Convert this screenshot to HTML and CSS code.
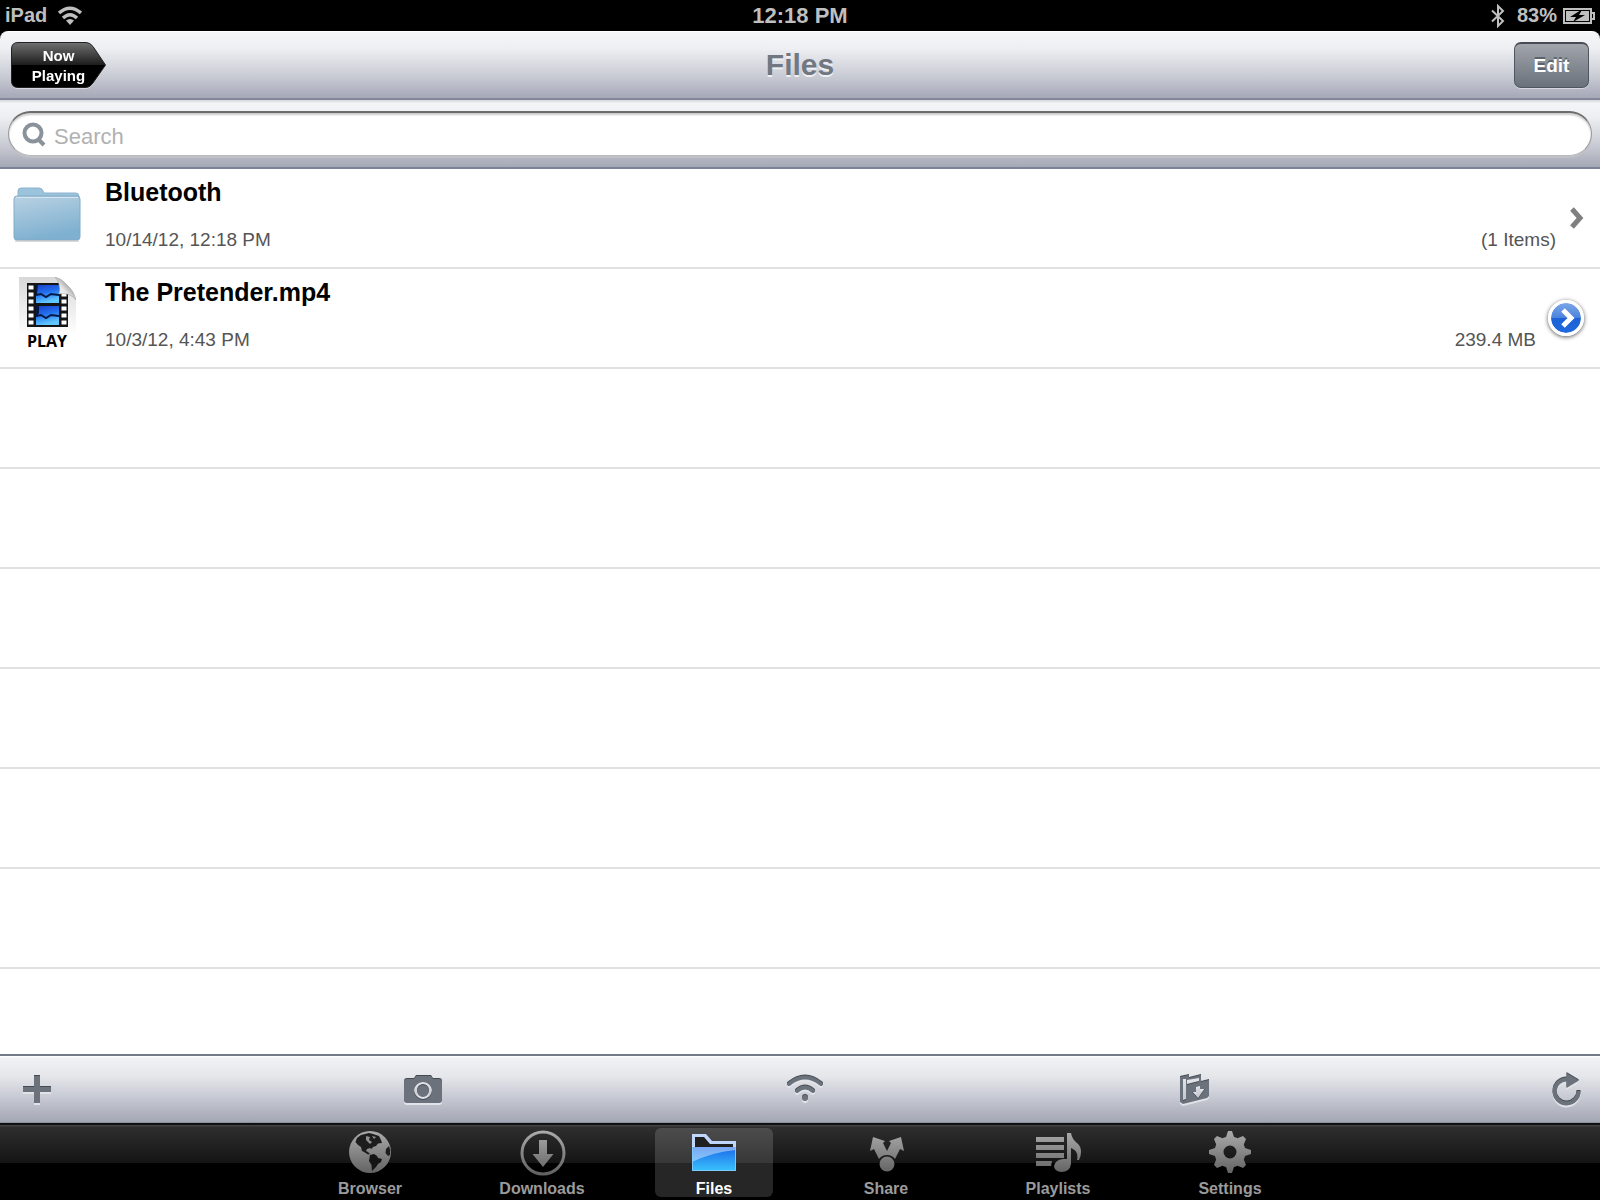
FILE: index.html
```html
<!DOCTYPE html>
<html lang="en">
<head>
    <meta charset="UTF-8">
    <meta name="viewport" content="width=device-width, initial-scale=1.0">
    <title>Files</title>
    <link rel="stylesheet" href="styles.css">
</head>
<body>
    <div class="status-bar">
        <div class="status-left">
            <span>iPad</span>
            <svg width="24" height="20" viewBox="0 0 24 20" fill="none" stroke="#bfbfbf" stroke-width="3.5">
                <path d="M1 7Q12 -2.5 23 7"/>
                <path d="M5 12Q12 5.5 19 12"/>
                <path d="M8 14.500Q12 11.500 16 14.500L12 19Z" fill="#bfbfbf" stroke="none"/>
            </svg>
        </div>
        <div class="status-time">12:18 PM</div>
        <div class="status-right">
            <svg width="14" height="24" viewBox="0 0 14 24" fill="none" stroke="#bfbfbf" stroke-width="2">
                <path d="M1 6.5L12 17L7 22V2L12 7L1 17.5"/>
            </svg>
            <span>83%</span>
            <svg width="32" height="16" viewBox="0 0 32 16">
                <rect x="1" y="1" width="27" height="14" fill="none" stroke="#bfbfbf" stroke-width="2"/>
                <rect x="3" y="3" width="23" height="10" fill="#bfbfbf"/>
                <path d="M29 5H31V11H29" fill="none" stroke="#bfbfbf" stroke-width="2"/>
                <path d="M18 2L7 9H13L10 14L22 7H16L19 2Z" fill="#000"/>
            </svg>
        </div>
    </div>

    <header class="nav-bar">
        <button class="now-playing" type="button">
            <svg class="now-playing-shape" viewBox="0 0 95 46">
                <defs>
                    <linearGradient id="black-gloss" x1="0" y1="0" x2="0" y2="1">
                        <stop offset="0" stop-color="#707070"/>
                        <stop offset="0.5" stop-color="#1c1c1c"/>
                        <stop offset="0.51" stop-color="#000"/>
                        <stop offset="1" stop-color="#000"/>
                    </linearGradient>
                </defs>
                <path d="M7 0.5H75Q79 0.5 82 4.5L94.5 23L82 41Q79 45.5 75 45.5H7Q0.5 45.5 0.5 39V7Q0.5 0.5 7 0.5Z" fill="url(#black-gloss)" stroke="#222"/>
            </svg>
            <span>Now<br>Playing</span>
        </button>
        <h1>Files</h1>
        <button class="edit" type="button">Edit</button>
    </header>

    <div class="search-bar">
        <label class="search-field">
            <svg width="24" height="26" viewBox="0 0 24 26" fill="none" stroke="#8a929b">
                <circle cx="11" cy="12" r="8.5" stroke-width="4"/>
                <path d="M16 18L22 24" stroke-width="4"/>
            </svg>
            <input type="text" placeholder="Search" aria-label="Search">
        </label>
    </div>

    <ul class="files">
        <li>
            <div class="thumb">
                <svg width="70" height="60" viewBox="0 0 70 60">
                    <defs>
                        <linearGradient id="folder" x1="0" y1="0" x2="0.3" y2="1">
                            <stop offset="0" stop-color="#b9d2e3"/>
                            <stop offset="1" stop-color="#7fb0d0"/>
                        </linearGradient>
                    </defs>
                    <path d="M6 12V5Q6 2 9 2H27Q30 2 31 5L32 7H64Q67 7 67 11V17H3Z" fill="#9cc3dc" stroke="#8ab3cd"/>
                    <rect x="2" y="10" width="66" height="44" rx="3" fill="url(#folder)" stroke="#82abc6"/>
                    <path d="M4 11.5H66" stroke="#d3e6f2"/>
                    <path d="M3 55H67" stroke="#b6b6b6"/>
                </svg>
            </div>
            <div class="info">
                <h2>Bluetooth</h2>
                <p><span>10/14/12, 12:18 PM</span><span>(1 Items)</span></p>
            </div>
            <a class="open" href="#bluetooth" aria-label="Open Bluetooth">
                <svg width="16" height="22" viewBox="0 0 16 22"><path d="M3 2L11 11L3 20" fill="none" stroke="#7f7f7f" stroke-width="5"/></svg>
            </a>
        </li>
        <li class="movie">
            <div class="thumb">
                <svg width="58" height="58" viewBox="0 0 58 58">
                    <defs>
                        <linearGradient id="paper" x1="0" y1="0" x2="0" y2="1">
                            <stop offset="0" stop-color="#d8d8d8"/>
                            <stop offset="1" stop-color="#fff"/>
                        </linearGradient>
                        <linearGradient id="frame" x1="0" y1="0" x2="0.3" y2="1">
                            <stop offset="0" stop-color="#1a40c8"/>
                            <stop offset="0.5" stop-color="#2272f0"/>
                            <stop offset="1" stop-color="#60c8ff"/>
                        </linearGradient>
                        <linearGradient id="curl" x1="0" y1="1" x2="0.7" y2="0.3">
                            <stop offset="0" stop-color="#fff"/>
                            <stop offset="0.6" stop-color="#e8e8e8"/>
                            <stop offset="1" stop-color="#999"/>
                        </linearGradient>
                    </defs>
                    <path d="M1 0H37L58 21V58H1Z" fill="url(#paper)"/>
                    <rect x="9" y="6" width="41" height="44" fill="#151515"/>
                    <path d="M13 8.5V50M46 8.5V50" stroke="#fff" stroke-width="5" stroke-dasharray="4 3"/>
                    <rect x="18" y="8" width="23" height="18" fill="url(#frame)"/>
                    <rect x="18" y="29" width="23" height="19" fill="url(#frame)"/>
                    <path d="M18 18L23 17L28 20L33 17L41 18M18 39L23 38L28 41L33 38L41 39" stroke="#071746" stroke-width="2" fill="none"/>
                    <path d="M18 8H20L19 17H18ZM18 29H21V36L19 40H18Z" fill="#071746"/>
                    <path d="M37 0H58V22Z" fill="#fff"/>
                    <path d="M37 0Q43 6 41 17Q52 15 58 23Q56 14 49 8Q43 1 37 0Z" fill="url(#curl)" stroke="#999" stroke-width="0.5"/>
                </svg>
                <span>PLAY</span>
            </div>
            <div class="info">
                <h2>The Pretender.mp4</h2>
                <p><span>10/3/12, 4:43 PM</span><span>239.4 MB</span></p>
            </div>
            <button class="disclosure" type="button" aria-label="Details">
                <svg width="14" height="20" viewBox="0 0 14 20"><path d="M2 2L10 10L2 18" fill="none" stroke="#fff" stroke-width="5"/></svg>
            </button>
        </li>
        <li></li>
        <li></li>
        <li></li>
        <li></li>
        <li></li>
        <li></li>
        <li></li>
    </ul>

    <div class="toolbar">
        <button class="tool-add" type="button" aria-label="Add">
            <svg width="30" height="30" viewBox="0 0 30 30"><path d="M11 2H17V13H28V18H17V29H11V18H0V13H11Z"/></svg>
        </button>
        <button class="tool-camera" type="button" aria-label="Camera">
            <svg width="38" height="30" viewBox="0 0 38 30">
                <path fill-rule="evenodd" d="M3 5H10L12 2H27L29 5H35Q38 5 38 8V26Q38 29 35 29H3Q0 29 0 26V8Q0 5 3 5ZM19 8A9 9 0 1 0 19 26A9 9 0 1 0 19 8ZM19 11A6 6 0 1 1 19 23A6 6 0 1 1 19 11Z"/>
            </svg>
        </button>
        <button class="tool-wifi" type="button" aria-label="WiFi transfer">
            <svg class="lines" width="38" height="30" viewBox="0 0 38 30">
                <path d="M4 10Q20 -3 36 10M12 17Q20 10 28 17"/>
                <circle class="dot" cx="20" cy="24" r="3"/>
            </svg>
        </button>
        <button class="tool-folder" type="button" aria-label="Move to folder">
            <svg width="30" height="30" viewBox="0 0 30 30">
                <path fill-rule="evenodd" d="M1 3L10 1V4L22 1V8L30 6V22L28 24L4 30L1 28ZM4 5V27L7 26V5ZM8 6V11L20 8V4ZM17 13V18H13L19 25L26 15H21V12Z"/>
            </svg>
        </button>
        <button class="tool-refresh" type="button" aria-label="Refresh">
            <svg width="30" height="36" viewBox="0 0 30 36">
                <path d="M15 8.5A12 12 0 1 0 26.5 20" fill="none" stroke="#6b727b" stroke-width="4"/>
                <path d="M14.5 2L27 9.5L14.5 17Z"/>
            </svg>
        </button>
    </div>

    <nav class="tab-bar">
        <a href="#browser">
            <svg viewBox="0 0 48 48">
                <defs>
                    <linearGradient id="silver" gradientUnits="userSpaceOnUse" x1="0" y1="3" x2="0" y2="45">
                        <stop offset="0" stop-color="#ababab"/>
                        <stop offset="1" stop-color="#636363"/>
                    </linearGradient>
                </defs>
                <circle cx="24" cy="24" r="21" fill="url(#silver)"/>
                <path d="M9.5 14L11 10L15 7L19 6L23 5L27 6L33 8L35 12L36 15L32 15.5L30 18L27 19L25.5 21L24 20L21 21L20 23L22 24L24 26L22 26.5L18 24L16 23L15 19L12 17Z" fill="#1d1d1d"/>
                <path d="M20 8L24 9L23 12L26 14L24 16L20 12ZM26 8L30 9L28 11Z" fill="#8f8f8f"/>
                <path d="M24 27L28 26L31 28L32 30L36 31L35 34L32 36L30 39L26 43L25.5 37L23 33Z" fill="#141414"/>
                <path d="M43 18L40 21L39.5 25L42 28L44 27Q45 22 43 18Z" fill="#1d1d1d"/>
            </svg>
            <span>Browser</span>
        </a>
        <a href="#downloads">
            <svg viewBox="0 0 48 48">
                <circle cx="25" cy="25" r="21" fill="none" stroke="url(#silver)" stroke-width="3"/>
                <path d="M21 12H29V26H35.5L25 39L14.5 26H21Z" fill="url(#silver)"/>
            </svg>
            <span>Downloads</span>
        </a>
        <a class="selected" href="#files">
            <svg viewBox="0 0 48 48">
                <defs>
                    <linearGradient id="blue" x1="0" y1="0" x2="0" y2="1">
                        <stop offset="0" stop-color="#1b68ea"/>
                        <stop offset="1" stop-color="#3ac3fc"/>
                    </linearGradient>
                </defs>
                <path d="M2 6H16L22 13H46V20H2Z" fill="#c0d6fa"/>
                <path d="M5 9H14L20 16H43V19H5Z" fill="#202020"/>
                <path d="M2 19H46V43H2Z" fill="url(#blue)"/>
                <path d="M2 19H46V22Q23 24 2 34Z" fill="#fff" fill-opacity="0.42"/>
                <path d="M2.5 19V42.5H45.5V19" fill="none" stroke="#7cc8fa"/>
            </svg>
            <span>Files</span>
        </a>
        <a href="#share">
            <svg viewBox="0 0 48 48" fill="url(#silver)">
                <path d="M11 9L23 13L21 15L25 23L29 15L27 13L39 9L42 23L38 21L33 31Q30 27 25 27Q20 27 17 31L12 21L8 23Z"/>
                <circle cx="25" cy="36" r="7.5"/>
            </svg>
            <span>Share</span>
        </a>
        <a href="#playlists">
            <svg viewBox="0 0 48 48" fill="url(#silver)">
                <path d="M2 9H30V14H2ZM2 17H30V22H2ZM2 25H30V30H2ZM2 33H18L17 38H2Z"/>
                <path d="M33 5H37Q38 11 43 15Q50 21 45 32H43Q45 23 37 20V36Q36 44 27 44Q20 43 20 38Q21 32 29 31H33Z"/>
            </svg>
            <span>Playlists</span>
        </a>
        <a href="#settings">
            <svg viewBox="0 0 48 48" fill="url(#silver)">
                <path fill-rule="evenodd" d="M22 3H26L28 9Q30 9.5 31.5 10.2L37 8L40 11L37.8 16.5Q38.500 18 39 20L45 22V26L39 28Q38.500 30 37.8 31.500L40 37L37 40L31.500 37.800Q30 38.500 28 39L26 45H22L20 39Q18 38.500 16.500 37.800L11 40L8 37L10.200 31.500Q9.500 30 9 28L3 26V22L9 20Q9.500 18 10.200 16.500L8 11L11 8L16.500 10.200Q18 9.500 20 9ZM24 17.500A6.500 6.500 0 1 0 24 30.500A6.500 6.500 0 1 0 24 17.500Z"/>
            </svg>
            <span>Settings</span>
        </a>
    </nav>
</body>
</html>
```
FILE: styles.css
```css
* {
    box-sizing: border-box;
}

body {
    margin: 0;
    height: 100vh;
    display: flex;
    flex-direction: column;
    overflow: hidden;
    background: #000;
    font-family: "Liberation Sans", Arial, sans-serif;
}

button {
    border: 0;
    padding: 0;
    background: none;
    font-family: inherit;
}

svg {
    display: block;
    flex: none;
}

.status-bar {
    display: grid;
    grid-template-columns: 1fr auto 1fr;
    align-items: center;
    height: 31px;
    padding: 0 5px;
    color: #bfbfbf;
    font-size: 20px;
    font-weight: bold;
}

.status-left,
.status-right {
    display: flex;
    align-items: center;
    gap: 11px;
}

.status-right {
    justify-content: flex-end;
    gap: 6px;
}

.status-right span {
    margin-left: 6px;
}

.status-time {
    font-size: 22px;
}

.nav-bar {
    display: grid;
    grid-template-columns: 1fr auto 1fr;
    align-items: center;
    height: 69px;
    padding: 0 11px;
    border-top: 1px solid #fff;
    border-bottom: 2px solid #82889a;
    border-radius: 8px 8px 0 0;
    background: linear-gradient(#f5f6f8, #eeeff2 25%, #cbcdd6 65%, #a5a8b6);
}

.nav-bar h1 {
    margin: 0;
    color: #717881;
    font-size: 30px;
    text-shadow: 0 2px 0 #eef0f4;
}

.now-playing {
    position: relative;
    width: 95px;
    height: 46px;
    padding-top: 2px;
    color: #fff;
    font-size: 15px;
    font-weight: bold;
    line-height: 20px;
    filter: drop-shadow(0 1px 0 #d5d7dd);
}

.now-playing-shape {
    position: absolute;
    inset: 0;
}

.now-playing span {
    position: relative;
}

.edit {
    justify-self: end;
    width: 75px;
    height: 46px;
    border: 1px solid #50565e;
    border-top: 2px solid #474c53;
    border-radius: 7px;
    background: linear-gradient(#a2a5ac, #858b93 50%, #69717b);
    box-shadow: 0 1px 0 #d5d7dd;
    color: #fff;
    font-size: 19px;
    font-weight: bold;
    text-shadow: 0 -2px 0 #5c636c;
}

.search-bar {
    height: 69px;
    padding: 11px 8px;
    border-bottom: 2px solid #7d8397;
    background: linear-gradient(#d5d7db, #f4f5f7 5%, #eeeff2 25%, #cbcdd6 65%, #a5a8b6);
}

.search-field {
    display: flex;
    align-items: center;
    gap: 8px;
    height: 45px;
    padding-left: 13px;
    border: 1px solid #999;
    border-top: 2px solid #6c6c6c;
    border-bottom: 1px solid #b9babd;
    border-radius: 23px;
    background: #fff;
    box-shadow: inset 0 2px 2px #ccc, 0 2px 0 #bfc1c7;
}

.search-field input {
    flex: 1;
    border: 0;
    outline: 0;
    padding: 5px 0 0;
    background: none;
    font-family: inherit;
    font-size: 22px;
}

.search-field input::placeholder {
    color: #b1b1b1;
}

.files {
    flex: 1;
    min-height: 0;
    overflow: hidden;
    margin: 0;
    padding: 0;
    list-style: none;
    background: #fff;
}

.files li {
    display: flex;
    height: 100px;
    padding-left: 12px;
    border-bottom: 2px solid #e0e0e0;
}

.thumb {
    display: flex;
    flex-direction: column;
    align-items: center;
    width: 70px;
    margin-right: 23px;
    padding-top: 17px;
}

.movie .thumb {
    padding-top: 8px;
}

.thumb span {
    font: bold 16px/12px "Open Sans", sans-serif;
}

.info {
    flex: 1;
    padding-top: 8px;
}

.info h2 {
    margin: 0 0 21px;
    color: #000;
    font-size: 25px;
    line-height: 30px;
}

.info p {
    display: flex;
    justify-content: space-between;
    margin: 0;
    color: #555;
    font-size: 19px;
    line-height: 24px;
}

.open {
    align-self: center;
    margin: 0 15px 0 13px;
}

.disclosure {
    display: flex;
    align-items: center;
    justify-content: center;
    align-self: center;
    width: 36px;
    height: 36px;
    margin: 0 16px 0 12px;
    padding-left: 3px;
    border: 3px solid #fff;
    border-radius: 50%;
    background: linear-gradient(#7ba6e8, #4a83dc 50%, #1c62d6 51%, #2069de) padding-box;
    box-shadow: 0 1px 4px #555;
}

.toolbar {
    display: flex;
    justify-content: space-between;
    align-items: center;
    height: 69px;
    padding: 0 19px 0 4px;
    border-top: 2px solid #747b88;
    border-bottom: 1px solid #8a90a0;
    background: linear-gradient(#fff, #f0f1f4 4%, #e6e7eb 30%, #c8cad4 62%, #a3a6b4);
}

.toolbar button {
    display: flex;
    justify-content: center;
}

.toolbar svg {
    fill: #6b727b;
    filter: drop-shadow(0 -1px 0 #454b52) drop-shadow(0 2px 0 #e1e3e9);
}

.toolbar .lines {
    fill: none;
    stroke: #6b727b;
    stroke-width: 4;
    stroke-linecap: round;
}

.toolbar .dot {
    fill: #6b727b;
    stroke: none;
}

/* tap areas are not all alike, the free space between them is */
.tool-add {
    width: 67px;
}

.tool-camera {
    width: 44px;
}

.tool-wifi,
.tool-folder {
    width: 60px;
}

.tool-refresh {
    width: 28px;
}

.tab-bar {
    display: flex;
    justify-content: center;
    gap: 54px;
    height: 77px;
    padding-top: 3px;
    border-top: 2px solid #111;
    background: linear-gradient(#484848, #2e2e2e 3%, #151515 50%, #000 51%);
}

.tab-bar a {
    display: flex;
    flex-direction: column;
    align-items: center;
    width: 118px;
    height: 69px;
    border-radius: 6px;
    color: #9b9b9b;
    font-size: 16px;
    font-weight: bold;
    line-height: 26px;
    text-decoration: none;
}

.tab-bar svg {
    width: 48px;
    height: 48px;
}

.tab-bar .selected {
    background: rgba(255, 255, 255, 0.15);
    color: #fff;
}
```
